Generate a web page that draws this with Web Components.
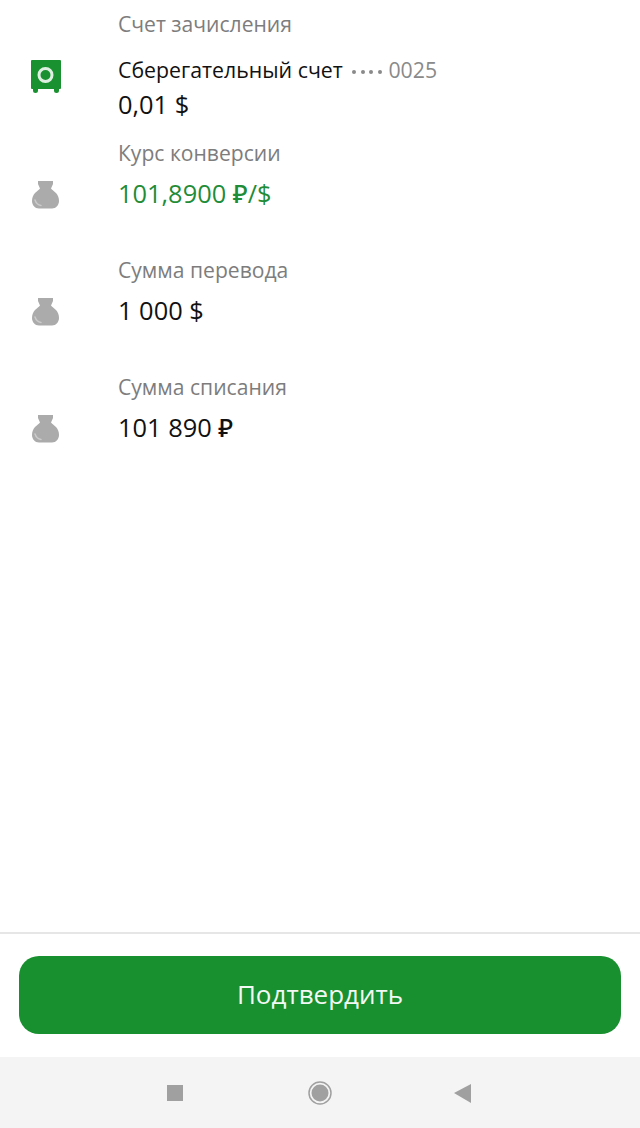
<!DOCTYPE html>
<html lang="ru">
<head>
<meta charset="utf-8">
<title>Подтверждение</title>
<style>
  html, body { margin: 0; height: 100%; background: #fff; }
  body { font-family: "Open Sans", "Noto Sans", sans-serif; }
</style>
</head>
<body>
<confirm-screen>
  <detail-row label="Счет зачисления" icon="safe" class="account">
    <div slot="account">Сберегательный счет <account-mask>0025</account-mask></div>
    0,01 $
  </detail-row>
  <detail-row label="Курс конверсии" icon="bag" tone="green">101,8900 ₽/$</detail-row>
  <detail-row label="Сумма перевода" icon="bag">1 000 $</detail-row>
  <detail-row label="Сумма списания" icon="bag">101 890 ₽</detail-row>
  <confirm-footer slot="footer">Подтвердить</confirm-footer>
  <nav-bar slot="nav"></nav-bar>
</confirm-screen>

<script>
const ICONS = {
  safe: `<svg width="32" height="34" viewBox="0 0 32 34">
    <path d="M2 1h28a1 1 0 0 1 1 1v27a1 1 0 0 1-1 1H2a1 1 0 0 1-1-1V2a1 1 0 0 1 1-1z" fill="#1a9130"/>
    <path d="M3 30h5v1.500a2.500 2.500 0 0 1-5 0zM24 30h5v1.500a2.500 2.500 0 0 1-5 0z" fill="#1a9130"/>
    <circle cx="15.500" cy="16" r="6.500" fill="none" stroke="#dff0e2" stroke-width="3"/>
  </svg>`,
  bag: `<svg width="30" height="30" viewBox="0 -1 30 30">
    <path d="M8 1h15v3l-2 4.500c1 1.500 3 2.500 5 4.500 2 2 3 5 3 8 0 4-3 7.500-7 7.500h-13c-4 0-7-3.500-7-7.500 0-3 1-6 3-8 2-2 4-3 5-4.500L8 4z" fill="#ababab"/>
    <path d="M5 20c1 3 3 5 6 5.500" fill="none" stroke="#cbcbcb" stroke-width="1.500" stroke-linecap="round"/>
  </svg>`
};

class ConfirmScreen extends HTMLElement {
  constructor() {
    super();
    this.attachShadow({ mode: 'open' });
  }

  connectedCallback() {
    this.shadowRoot.innerHTML = `
    <style>
    :host {
      display: flex;
      flex-direction: column;
      height: 1128px;
    }
    .list {
      flex: 1;
      padding-top: 10px;
    }
    </style>
    <div class="list"><slot></slot></div>
    <slot name="footer"></slot>
    <slot name="nav"></slot>
    `;
  }
}

class DetailRow extends HTMLElement {
  constructor() {
    super();
    this.attachShadow({ mode: 'open' });
  }

  connectedCallback() {
    const icon = ICONS[this.getAttribute('icon')] || '';
    this.shadowRoot.innerHTML = `
    <style>
    :host {
      display: grid;
      grid-template-columns: 32px 1fr;
      column-gap: 56px;
      padding-left: 30px;
      margin-bottom: 47px;
    }
    :host(.account) {
      margin-bottom: 19px;
    }
    .icon {
      align-self: end;
      display: flex;
      line-height: 0;
    }
    :host(.account) .icon {
      align-self: start;
      margin-top: 21px;
    }
    .label {
      font-size: 21.1px;
      line-height: 28px;
      color: #7d7d7d;
    }
    .account {
      font-size: 21.3px;
      line-height: 28px;
      font-weight: 500;
      color: #111;
      margin-top: 18px;
      white-space: nowrap;
    }
    .value {
      font-size: 25.4px;
      line-height: 32px;
      font-weight: 500;
      color: #111;
      margin-top: 10px;
    }
    :host(.account) .value {
      margin-top: 4px;
    }
    :host([tone="green"]) .value {
      color: #1f8c38;
    }
    </style>
    <div></div>
    <div class="label">${this.getAttribute('label')}</div>
    <div class="icon">${icon}</div>
    <div>
      <div class="account"><slot name="account"></slot></div>
      <div class="value"><slot></slot></div>
    </div>
    `;
    if (!this.querySelector('[slot="account"]')) {
      this.shadowRoot.querySelector('.account').style.display = 'none';
    }
  }
}

class AccountMask extends HTMLElement {
  constructor() {
    super();
    this.attachShadow({ mode: 'open' });
  }

  connectedCallback() {
    this.shadowRoot.innerHTML = `
    <style>
    :host {
      display: inline;
      color: #8a8a8a;
      font-weight: 400;
    }
    .dots {
      display: inline-flex;
      gap: 4.500px;
      vertical-align: middle;
      margin: 0 1px 0 4px;
    }
    .dots i {
      width: 4px;
      height: 4px;
      border-radius: 50%;
      background: #8a8a8a;
    }
    </style>
    <span class="dots"><i></i><i></i><i></i><i></i></span>
    <slot></slot>
    `;
  }
}

class ConfirmFooter extends HTMLElement {
  constructor() {
    super();
    this.attachShadow({ mode: 'open' });
  }

  connectedCallback() {
    this.shadowRoot.innerHTML = `
    <style>
    :host {
      display: block;
      border-top: 2px solid #e6e6e6;
      padding: 22px 19px 23px;
    }
    .btn {
      height: 78px;
      box-sizing: border-box;
      padding-bottom: 2px;
      border-radius: 20px;
      background: #18902f;
      color: #f2f8f3;
      display: flex;
      align-items: center;
      justify-content: center;
      font-size: 26px;
    }
    </style>
    <div class="btn"><slot></slot></div>
    `;
  }
}

class NavBar extends HTMLElement {
  constructor() {
    super();
    this.attachShadow({ mode: 'open' });
  }

  connectedCallback() {
    this.shadowRoot.innerHTML = `
    <style>
    :host {
      display: flex;
      height: 71px;
      background: #f4f4f4;
      align-items: center;
      justify-content: center;
      gap: 121px;
    }
    svg { display: block; }
    </style>
    <svg width="24" height="24" viewBox="0 0 24 24"><rect x="4" y="4" width="16" height="16" fill="#a0a0a0"/></svg>
    <svg width="24" height="26" viewBox="0 0 24 26"><circle cx="12" cy="13" r="8.500" fill="#a0a0a0"/><circle cx="12" cy="13" r="11" fill="none" stroke="#a0a0a0" stroke-width="1.500"/></svg>
    <svg width="24" height="24" viewBox="0 0 24 24"><path d="M1 12 18 3v19z" fill="#a0a0a0"/></svg>
    `;
  }
}

customElements.define('confirm-screen', ConfirmScreen);
customElements.define('detail-row', DetailRow);
customElements.define('account-mask', AccountMask);
customElements.define('confirm-footer', ConfirmFooter);
customElements.define('nav-bar', NavBar);
</script>
</body>
</html>
